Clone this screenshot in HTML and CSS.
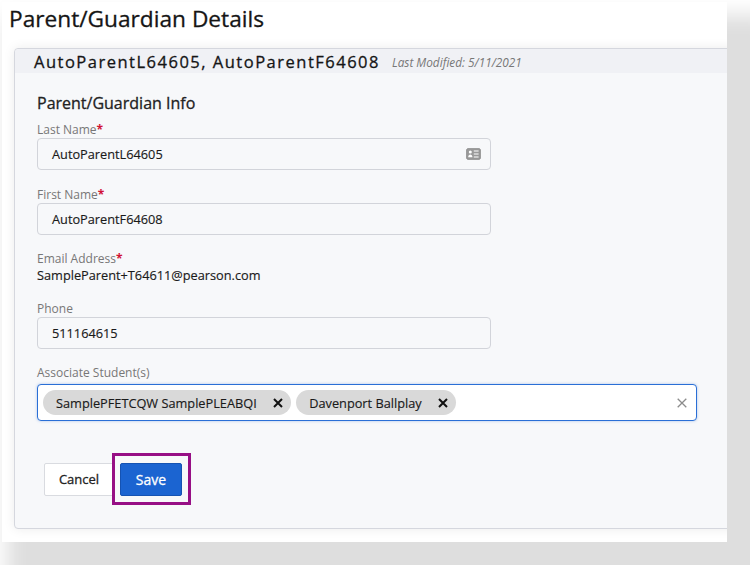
FILE: index.html
```html
<!DOCTYPE html>
<html lang="en">
<head>
    <meta charset="UTF-8">
    <title>Parent/Guardian Details</title>
    <link rel="stylesheet" href="styles.css">
</head>
<body>
    <div class="sheet">
        <h1 class="page-title">Parent/Guardian Details</h1>
        <div class="card">
            <div class="card-header">
                <span class="card-name">AutoParentL64605, AutoParentF64608</span>
                <span class="card-modified">Last Modified: 5/11/2021</span>
            </div>
            <div class="card-body">
                <h2 class="section-title">Parent/Guardian Info</h2>

                <div class="field field-name">
                    <div class="field-label">Last Name<span class="req">*</span></div>
                    <div class="input">
                        <span>AutoParentL64605</span>
                        <svg class="card-icon" width="15" height="12" viewBox="0 0 15 12">
                            <rect x="0.7" y="0.7" width="13.6" height="10.6" rx="1.2" fill="#9a9a9a" stroke="#8e8e8e" stroke-width="1"/>
                            <circle cx="4.3" cy="4.1" r="1.5" fill="#fff"/>
                            <path d="M2.2 9.2c0-1.7 1-2.6 2.1-2.6s2.1.9 2.1 2.6z" fill="#fff"/>
                            <path d="M7.8 3h4.8M7.8 6h4.8M7.8 9h4.8" stroke="#fff" stroke-width="1.1"/>
                        </svg>
                    </div>
                </div>

                <div class="field field-name">
                    <div class="field-label">First Name<span class="req">*</span></div>
                    <div class="input"><span>AutoParentF64608</span></div>
                </div>

                <div class="field field-email">
                    <div class="field-label">Email Address<span class="req">*</span></div>
                    <div class="field-value">SampleParent+T64611@pearson.com</div>
                </div>

                <div class="field field-name">
                    <div class="field-label">Phone</div>
                    <div class="input"><span>511164615</span></div>
                </div>

                <div class="field field-students">
                    <div class="field-label">Associate Student(s)</div>
                    <div class="multi-select">
                        <span class="chip">SamplePFETCQW SamplePLEABQI
                            <svg class="chip-x" width="10" height="10" viewBox="0 0 10 10"><path d="M1 1l8 8M9 1l-8 8" stroke="#111" stroke-width="2"/></svg>
                        </span>
                        <span class="chip">Davenport Ballplay
                            <svg class="chip-x" width="10" height="10" viewBox="0 0 10 10"><path d="M1 1l8 8M9 1l-8 8" stroke="#111" stroke-width="2"/></svg>
                        </span>
                        <svg class="clear-x" width="10" height="10" viewBox="0 0 10 10"><path d="M.7.7l8.6 8.6M9.3.7L.7 9.3" stroke="#8c8c8c" stroke-width="1.3"/></svg>
                    </div>
                </div>

                <div class="actions">
                    <button class="btn btn-cancel">Cancel</button>
                    <span class="highlight"><button class="btn btn-save">Save</button></span>
                </div>
            </div>
        </div>
    </div>
</body>
</html>
```

FILE: styles.css
```css
* {
    margin: 0;
    padding: 0;
    box-sizing: border-box;
}

html, body {
    height: 565px;
    overflow: hidden;
}

body {
    font-family: 'Open Sans', 'Liberation Sans', sans-serif;
    background: #fff;
    color: #1a1a1a;
    padding: 2px 0 0 2px;
}

.sheet {
    width: 725px;
    height: 540px;
    background: #fff;
    overflow: hidden;
    box-shadow: 25px 33px 20px 20px #dedede;
}

.page-title {
    font-size: 22.7px;
    font-weight: 400;
    -webkit-text-stroke: 0.3px #151515;
    line-height: 28px;
    margin: 3px 0 0 7px;
    height: 43px;
    color: #151515;
}

.card {
    margin-left: 12px;
    width: 740px;
    height: 481px;
    border: 1px solid #d5d7de;
    border-radius: 4px;
    background: #f7f8fa;
    box-shadow: 0 0 12px rgba(0, 0, 0, 0.08);
}

.card-header {
    height: 24px;
    background: #f0f1f5;
    padding-left: 19px;
    display: flex;
    align-items: center;
    border-radius: 4px 4px 0 0;
}

.card-name {
    font-size: 16.5px;
    font-weight: 400;
    -webkit-text-stroke: 0.3px #151515;
    letter-spacing: 1.5px;
    color: #151515;
}

.card-modified {
    font-size: 11.8px;
    font-style: italic;
    color: #777;
    margin-left: 12px;
    padding-top: 2px;
}

.card-body {
    padding: 20px 0 0 22px;
}

.section-title {
    font-size: 16px;
    font-weight: 400;
    -webkit-text-stroke: 0.3px #222;
    line-height: 20px;
    color: #222;
    margin-bottom: 9px;
}

.field-label {
    font-size: 12px;
    line-height: 16px;
    color: #777;
}

.req {
    color: #d11336;
    font-weight: 700;
}

.field-name {
    width: 454px;
    margin-bottom: 17px;
}

.input {
    height: 32px;
    border: 1px solid #d2d4da;
    border-radius: 4px;
    padding: 0 9px 0 14px;
    display: flex;
    align-items: center;
    justify-content: space-between;
    font-size: 12.75px;
    -webkit-text-stroke: 0.15px #1a1a1a;
    color: #1a1a1a;
}

.field-email {
    margin-top: -1px;
    margin-bottom: 18px;
}

.field-value {
    font-size: 12.75px;
    -webkit-text-stroke: 0.15px #1a1a1a;
    line-height: 16px;
    color: #1a1a1a;
}

.field-students {
    width: 660px;
    margin-top: -1px;
}

.multi-select {
    height: 37px;
    margin-top: 3px;
    background: #fff;
    border: 1.5px solid #2a6fd6;
    border-radius: 4px;
    box-shadow: 0 0 3px rgba(29, 99, 207, 0.35);
    padding-left: 4.5px;
    display: flex;
    align-items: center;
    gap: 5px;
}

.chip {
    height: 25px;
    border-radius: 13px;
    background: #d9d9d9;
    padding: 0 8px 0 13.5px;
    display: flex;
    align-items: center;
    gap: 16px;
    font-size: 12.75px;
    -webkit-text-stroke: 0.15px #1a1a1a;
    color: #1a1a1a;
}

.clear-x {
    margin-left: auto;
    margin-right: 9px;
}

.actions {
    display: flex;
    align-items: center;
    margin: 32px 0 0 7px;
}

.btn {
    font-family: inherit;
    font-size: 13px;
    font-weight: 400;
    -webkit-text-stroke: 0.3px #222;
    height: 33px;
    border-radius: 2px;
}

.btn-cancel {
    width: 70px;
    background: #fff;
    border: 1px solid #d9dbe0;
    color: #222;
}

.highlight {
    display: flex;
    padding: 7px 6px 6px 5px;
    margin-left: -2px;
    border: 3px solid #970f85;
    position: relative;
}

.btn-save {
    width: 62px;
    background: #1b64d1;
    border: 1px solid #1553b3;
    color: #fff;
    -webkit-text-stroke: 0.3px #fff;
    font-size: 14px;
}
```
